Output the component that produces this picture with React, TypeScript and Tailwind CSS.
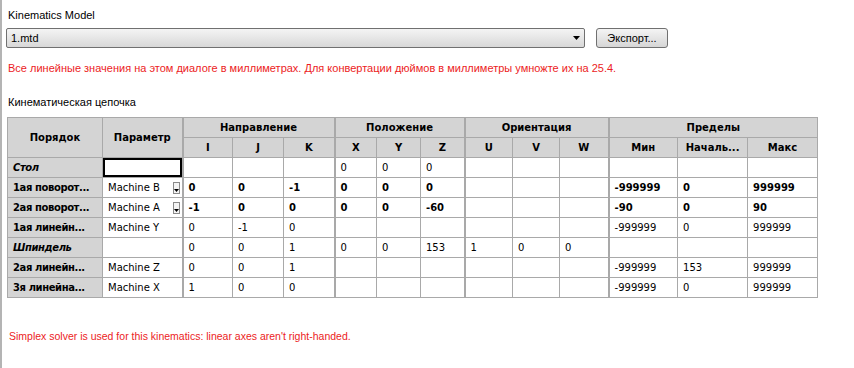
import React from "react";

type Row = {
  name: string;
  italic?: boolean;
  param: string;
  selected?: boolean;
  dropdown?: boolean;
  bold?: boolean;
  vals: string[];
};

const widths = [95, 80, 50, 51, 51, 42, 44, 44, 48, 47, 49, 69, 70, 70];
const groupStart = [2, 5, 8, 11];

const rows: Row[] = [
  { name: "Стол", italic: true, param: "", selected: true, vals: ["", "", "", "0", "0", "0", "", "", "", "", "", ""] },
  { name: "1ая поворот...", param: "Machine B", dropdown: true, bold: true, vals: ["0", "0", "-1", "0", "0", "0", "", "", "", "-999999", "0", "999999"] },
  { name: "2ая поворот...", param: "Machine A", dropdown: true, bold: true, vals: ["-1", "0", "0", "0", "0", "-60", "", "", "", "-90", "0", "90"] },
  { name: "1ая линейн...", param: "Machine Y", vals: ["0", "-1", "0", "", "", "", "", "", "", "-999999", "0", "999999"] },
  { name: "Шпиндель", italic: true, param: "", vals: ["0", "0", "1", "0", "0", "153", "1", "0", "0", "", "", ""] },
  { name: "2ая линейн...", param: "Machine Z", vals: ["0", "0", "1", "", "", "", "", "", "", "-999999", "153", "999999"] },
  { name: "3я линейна...", param: "Machine X", vals: ["1", "0", "0", "", "", "", "", "", "", "-999999", "0", "999999"] },
];

const ui = { fontFamily: '"Liberation Sans", Arial, sans-serif' };
const grid = { fontFamily: '"DejaVu Sans", Verdana, sans-serif' };

function MiniDrop() {
  return (
    <span className="ml-auto mr-[2px] flex h-[12px] w-[7px] items-end justify-center border border-[#8a8a8a] bg-[#f4f4f4] pb-[1px]">
      <svg width="5" height="3" viewBox="0 0 5 3">
        <path d="M0 0h5L2.5 3z" fill="#000" />
      </svg>
    </span>
  );
}

export default function App() {
  return (
    <div className="min-h-[368px] w-[854px] border-l-2 border-[#b4b4b4] bg-white pl-[4px] text-[11px] text-black" style={ui}>
      <div className="ml-[2px] pt-[8px] leading-[14px]">Kinematics Model</div>

      <div className="mt-[6px] flex items-center">
        <div className="flex h-[20px] w-[579px] items-center rounded-[2px] border border-[#707070] bg-gradient-to-b from-[#f4f4f4] to-[#d8d8d8] pl-[4px] pr-[3px]">
          <span>1.mtd</span>
          <svg className="ml-auto mr-[1px]" width="7" height="4" viewBox="0 0 7 4">
            <path d="M0 0h7L3.5 4z" fill="#000" />
          </svg>
        </div>
        <button className="ml-[11px] flex h-[20px] w-[72px] items-center justify-center rounded-[3px] border border-[#707070] bg-gradient-to-b from-[#f4f4f4] to-[#d6d6d6]">
          Экспорт...
        </button>
      </div>

      <div className="ml-[2px] mt-[13px] leading-[14px] text-[#ec1c24]">
        Все линейные значения на этом диалоге в миллиметрах. Для конвертации дюймов в миллиметры умножте их на 25.4.
      </div>

      <div className="ml-[2px] mt-[20px] leading-[14px]">Кинематическая цепочка</div>

      <table className="ml-[1px] mt-[8px] table-fixed border-collapse text-[10px]" style={{ ...grid, width: 810 }}>
        <colgroup>
          {widths.map((w, i) => (
            <col key={i} style={{ width: w }} />
          ))}
        </colgroup>
        <thead>
          <tr className="h-[20px] bg-[#d4d4d4] font-bold">
            <th rowSpan={2} className="border border-[#a9a9a9] text-center">Порядок</th>
            <th rowSpan={2} className="border border-[#a9a9a9] text-center">Параметр</th>
            <th colSpan={3} className="border border-l-2 border-[#a9a9a9] text-center">Направление</th>
            <th colSpan={3} className="border border-l-2 border-[#a9a9a9] text-center">Положение</th>
            <th colSpan={3} className="border border-l-2 border-[#a9a9a9] text-center">Ориентация</th>
            <th colSpan={3} className="border border-l-2 border-[#a9a9a9] text-center">Пределы</th>
          </tr>
          <tr className="h-[20px] bg-[#d4d4d4] font-bold">
            {["I", "J", "K", "X", "Y", "Z", "U", "V", "W", "Мин", "Началь...", "Макс"].map((h, i) => (
              <th
                key={h}
                className={
                  groupStart.includes(i + 2)
                    ? "border border-l-2 border-[#a9a9a9] text-center"
                    : "border border-[#a9a9a9] text-center"
                }
              >
                {h}
              </th>
            ))}
          </tr>
        </thead>
        <tbody>
          {rows.map((r) => (
            <tr key={r.name} className="h-[20px]">
              <td
                className={
                  r.italic
                    ? "whitespace-nowrap border border-[#a9a9a9] bg-[#d4d4d4] pl-[5px] font-bold italic tracking-[-0.4px]"
                    : "whitespace-nowrap border border-[#a9a9a9] bg-[#d4d4d4] pl-[5px] font-bold tracking-[-0.4px]"
                }
              >
                {r.name}
              </td>
              <td
                className={
                  r.selected
                    ? "border border-[#a9a9a9] p-0 shadow-[inset_0_0_0_2px_#000]"
                    : "border border-[#a9a9a9] p-0"
                }
              >
                <div className="flex h-[19px] items-center pl-[5px]">
                  <span>{r.param}</span>
                  {r.dropdown && <MiniDrop />}
                </div>
              </td>
              {r.vals.map((v, i) => (
                <td
                  key={i}
                  className={
                    (groupStart.includes(i + 2)
                      ? "border border-l-2 border-[#a9a9a9] pl-[5px]"
                      : "border border-[#a9a9a9] pl-[5px]") + (r.bold ? " font-bold" : "")
                  }
                >
                  {v}
                </td>
              ))}
            </tr>
          ))}
        </tbody>
      </table>

      <div className="ml-[3px] mt-[31px] text-[10.5px] leading-[14px] text-[#ec1c24]">
        Simplex solver is used for this kinematics: linear axes aren't right-handed.
      </div>
    </div>
  );
}
